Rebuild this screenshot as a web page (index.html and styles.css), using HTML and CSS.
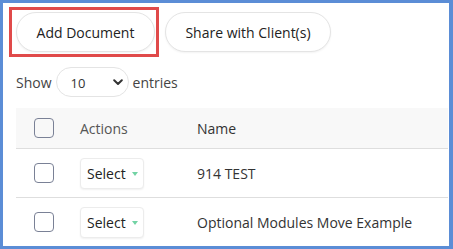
FILE: index.html
```html
<!DOCTYPE html>
<html>
<head>
<meta charset="utf-8">
<link rel="stylesheet" href="styles.css">
</head>
<body>
<div class="frame">
  <div class="btn-row">
    <button class="pill-btn btn-add">Add Document</button>
    <button class="pill-btn btn-share">Share with Client(s)</button>
  </div>
  <div class="highlight"></div>
  <div class="length-row">
    <span>Show</span>
    <div class="len-select">
      <span>10</span>
      <svg class="chev" width="10" height="7" viewBox="0 0 10 7"><path d="M1.2 1.3 L5 5 L8.8 1.3" fill="none" stroke="#333" stroke-width="2" stroke-linecap="round" stroke-linejoin="round"/></svg>
    </div>
    <span>entries</span>
  </div>
  <div class="table">
    <div class="row head">
      <div class="c-check"><span class="checkbox"></span></div>
      <div class="c-act">Actions</div>
      <div class="c-name">Name</div>
    </div>
    <div class="row">
      <div class="c-check"><span class="checkbox"></span></div>
      <div class="c-act"><span class="sel-btn">Select <span class="caret"></span></span></div>
      <div class="c-name">914 TEST</div>
    </div>
    <div class="row last">
      <div class="c-check"><span class="checkbox"></span></div>
      <div class="c-act"><span class="sel-btn">Select <span class="caret"></span></span></div>
      <div class="c-name">Optional Modules Move Example</div>
    </div>
  </div>
</div>
</body>
</html>
```
FILE: styles.css
```css
html, body {
  margin: 0;
  padding: 0;
  background: #fff;
}
.frame {
  position: relative;
  box-sizing: border-box;
  width: 453px;
  height: 249px;
  border: 3px solid #5b8dd6;
  border-right-width: 4px;
  padding: 9px 0 0 13px;
  font-family: "Open Sans", "Liberation Sans", sans-serif;
  font-size: 14px;
  color: #333;
  overflow: hidden;
}
.btn-row {
  display: flex;
  gap: 10px;
  height: 40px;
}
.pill-btn {
  font-family: inherit;
  font-size: 14px;
  color: #222;
  background: #fff;
  border: 1px solid #e4e4e4;
  border-radius: 20px;
  height: 40px;
  padding: 0;
  box-shadow: 0 1px 2px rgba(0,0,0,0.05);
}
.btn-add { width: 139px; }
.btn-share { width: 166px; }
.highlight {
  position: absolute;
  left: 6px;
  top: 4px;
  width: 144px;
  height: 44px;
  border: 3px solid #e04a4a;
}
.length-row {
  display: flex;
  align-items: center;
  gap: 4px;
  margin-top: 15px;
  height: 30px;
  color: #444;
}
.len-select {
  box-sizing: border-box;
  width: 73px;
  height: 30px;
  border: 1px solid #e4e4e4;
  border-radius: 15px;
  display: flex;
  align-items: center;
  padding: 0 5px 0 14px;
  justify-content: space-between;
  font-size: 13px;
  color: #333;
}
.len-select span { padding-top: 2px; }
.table {
  margin-top: 11px;
  width: 432px;
}
.row {
  display: flex;
  align-items: center;
  height: 48px;
  border-bottom: 1px solid #dedede;
}
.row.last { border-bottom: none; }
.row.head {
  height: 40px;
  background: #f8f8f8;
  color: #555;
}
.c-check {
  width: 64px;
  padding-left: 18px;
  box-sizing: border-box;
  display: flex;
  align-items: center;
}
.c-act { width: 117px; }
.checkbox {
  display: block;
  box-sizing: border-box;
  width: 20px;
  height: 20px;
  border: 1.5px solid #7a8196;
  border-radius: 4px;
}
.sel-btn {
  box-sizing: border-box;
  display: inline-flex;
  align-items: center;
  gap: 6px;
  width: 64px;
  height: 31px;
  padding-left: 6px;
  border: 1px solid #ececec;
  border-radius: 4px;
  background: #fff;
  box-shadow: 0 1px 2px rgba(0,0,0,0.06);
  color: #222;
}
.caret {
  width: 0;
  height: 0;
  border-left: 3.5px solid transparent;
  border-right: 3.5px solid transparent;
  border-top: 4px solid #72d3a4;
  margin-top: 1px;
}
.c-name { color: #333; }
```
